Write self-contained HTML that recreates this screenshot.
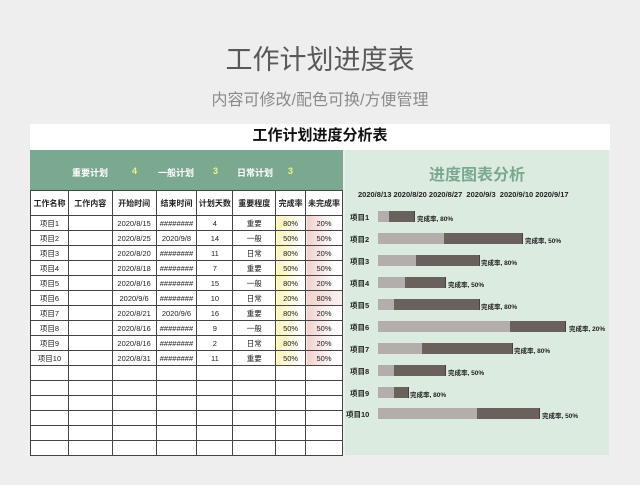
<!DOCTYPE html>
<html><head><meta charset="utf-8"><style>
*{margin:0;padding:0;box-sizing:border-box}
body{width:640px;height:485px;background:#eeeeee;font-family:"Liberation Sans","Noto Sans CJK SC",sans-serif;position:relative;overflow:hidden}
.a{position:absolute}
.t1{left:0;width:640px;top:38px;text-align:center;font-size:27px;color:#595959}
.t2{left:0;width:640px;top:86px;text-align:center;font-size:16px;color:#8a8a8a}
.wh{left:30px;top:124px;width:580px;height:26px;background:#fff;text-align:center;font-size:15px;font-weight:bold;color:#111;line-height:24px}
.gh{left:30px;top:150px;width:313px;height:40px;background:#7aa98f;color:#fff;font-size:9px;font-weight:bold}
.gh span{position:absolute;top:16px}
.gh .n{color:#f3f089}
table{position:absolute;left:30px;top:190px;width:313px;border-collapse:collapse;background:#fff;font-size:7.5px;color:#222}
td{border:1px solid #444;text-align:center;height:15px;padding:0;white-space:nowrap;overflow:hidden}
tr.h td{height:25px;font-weight:bold;font-size:8px}
td.y{background:linear-gradient(90deg,#fbf5b5,#fff 85%)}
td.p{background:linear-gradient(90deg,#f1d0cc,#fff 80%)}
td.p8{background:linear-gradient(90deg,#f1d0cc,#fbefed 90%)}
.rp{left:345px;top:150px;width:264px;height:305px;background:#dcebdf}
.rt{left:345px;top:161px;width:264px;text-align:center;font-size:16px;font-weight:bold;color:#7aa98f}
.dt{left:358px;top:190px;font-size:7.5px;font-weight:bold;color:#222;white-space:nowrap}
.lb{font-size:7.5px;font-weight:bold;color:#222}
.b1{background:#b3aeab;height:11px}
.b2{background:#6b615c;height:11px;border-right:1.5px solid #4a413d}
.bl{font-size:6.5px;font-weight:bold;color:#222;white-space:nowrap}
</style></head><body>
<div class="a t1">工作计划进度表</div>
<div class="a t2">内容可修改/配色可换/方便管理</div>
<div class="a wh">工作计划进度分析表</div>
<div class="a gh"><span style="left:42px">重要计划</span><span class="n" style="left:102px">4</span><span style="left:128px">一般计划</span><span class="n" style="left:183px">3</span><span style="left:207px">日常计划</span><span class="n" style="left:258px">3</span></div>
<table>
<colgroup><col style="width:38px"><col style="width:44px"><col style="width:44px"><col style="width:41px"><col style="width:36px"><col style="width:43px"><col style="width:30px"><col style="width:37px"></colgroup>
<tr class="h"><td>工作名称</td><td>工作内容</td><td>开始时间</td><td>结束时间</td><td>计划天数</td><td>重要程度</td><td>完成率</td><td>未完成率</td></tr>
<tr><td>项目1</td><td></td><td>2020/8/15</td><td>########</td><td>4</td><td>重要</td><td class="y">80%</td><td class="p">20%</td></tr>
<tr><td>项目2</td><td></td><td>2020/8/25</td><td>2020/9/8</td><td>14</td><td>一般</td><td class="y">50%</td><td class="p">50%</td></tr>
<tr><td>项目3</td><td></td><td>2020/8/20</td><td>########</td><td>11</td><td>日常</td><td class="y">80%</td><td class="p">20%</td></tr>
<tr><td>项目4</td><td></td><td>2020/8/18</td><td>########</td><td>7</td><td>重要</td><td class="y">50%</td><td class="p">50%</td></tr>
<tr><td>项目5</td><td></td><td>2020/8/16</td><td>########</td><td>15</td><td>一般</td><td class="y">80%</td><td class="p">20%</td></tr>
<tr><td>项目6</td><td></td><td>2020/9/6</td><td>########</td><td>10</td><td>日常</td><td class="y">20%</td><td class="p8">80%</td></tr>
<tr><td>项目7</td><td></td><td>2020/8/21</td><td>2020/9/6</td><td>16</td><td>重要</td><td class="y">80%</td><td class="p">20%</td></tr>
<tr><td>项目8</td><td></td><td>2020/8/16</td><td>########</td><td>9</td><td>一般</td><td class="y">50%</td><td class="p">50%</td></tr>
<tr><td>项目9</td><td></td><td>2020/8/16</td><td>########</td><td>2</td><td>日常</td><td class="y">80%</td><td class="p">20%</td></tr>
<tr><td>项目10</td><td></td><td>2020/8/31</td><td>########</td><td>11</td><td>重要</td><td class="y">50%</td><td class="p">50%</td></tr>
<tr><td></td><td></td><td></td><td></td><td></td><td></td><td></td><td></td></tr>
<tr><td></td><td></td><td></td><td></td><td></td><td></td><td></td><td></td></tr>
<tr><td></td><td></td><td></td><td></td><td></td><td></td><td></td><td></td></tr>
<tr><td></td><td></td><td></td><td></td><td></td><td></td><td></td><td></td></tr>
<tr><td></td><td></td><td></td><td></td><td></td><td></td><td></td><td></td></tr>
<tr><td></td><td></td><td></td><td></td><td></td><td></td><td></td><td></td></tr>
</table>
<div class="a rp"></div>
<div class="a rt">进度图表分析</div>
<div class="a dt">2020/8/13 2020/8/20 2020/8/27 &nbsp;2020/9/3 &nbsp;2020/9/10 2020/9/17</div>
<div class="a lb" style="left:350px;top:212px">项目1</div>
<div class="a b1" style="left:378px;top:211px;width:11px"></div><div class="a b2" style="left:389px;top:211px;width:26px"></div><div class="a bl" style="left:417px;top:213px">完成率, 80%</div>
<div class="a lb" style="left:350px;top:234px">项目2</div>
<div class="a b1" style="left:378px;top:233px;width:66px"></div><div class="a b2" style="left:444px;top:233px;width:79px"></div><div class="a bl" style="left:525px;top:235px">完成率, 50%</div>
<div class="a lb" style="left:350px;top:256px">项目3</div>
<div class="a b1" style="left:378px;top:255px;width:38px"></div><div class="a b2" style="left:416px;top:255px;width:64px"></div><div class="a bl" style="left:481px;top:257px">完成率, 80%</div>
<div class="a lb" style="left:350px;top:278px">项目4</div>
<div class="a b1" style="left:378px;top:277px;width:27px"></div><div class="a b2" style="left:405px;top:277px;width:41px"></div><div class="a bl" style="left:448px;top:279px">完成率, 50%</div>
<div class="a lb" style="left:350px;top:300px">项目5</div>
<div class="a b1" style="left:378px;top:299px;width:16px"></div><div class="a b2" style="left:394px;top:299px;width:86px"></div><div class="a bl" style="left:481px;top:301px">完成率, 80%</div>
<div class="a lb" style="left:350px;top:322px">项目6</div>
<div class="a b1" style="left:378px;top:321px;width:132px"></div><div class="a b2" style="left:510px;top:321px;width:56px"></div><div class="a bl" style="left:569px;top:323px">完成率, 20%</div>
<div class="a lb" style="left:350px;top:344px">项目7</div>
<div class="a b1" style="left:378px;top:343px;width:44px"></div><div class="a b2" style="left:422px;top:343px;width:91px"></div><div class="a bl" style="left:514px;top:345px">完成率, 80%</div>
<div class="a lb" style="left:350px;top:366px">项目8</div>
<div class="a b1" style="left:378px;top:365px;width:16px"></div><div class="a b2" style="left:394px;top:365px;width:52px"></div><div class="a bl" style="left:448px;top:367px">完成率, 50%</div>
<div class="a lb" style="left:350px;top:388px">项目9</div>
<div class="a b1" style="left:378px;top:387px;width:16px"></div><div class="a b2" style="left:394px;top:387px;width:15px"></div><div class="a bl" style="left:410px;top:389px">完成率, 80%</div>
<div class="a lb" style="left:346px;top:409px">项目10</div>
<div class="a b1" style="left:378px;top:408px;width:99px"></div><div class="a b2" style="left:477px;top:408px;width:63px"></div><div class="a bl" style="left:542px;top:410px">完成率, 50%</div>
</body></html>
